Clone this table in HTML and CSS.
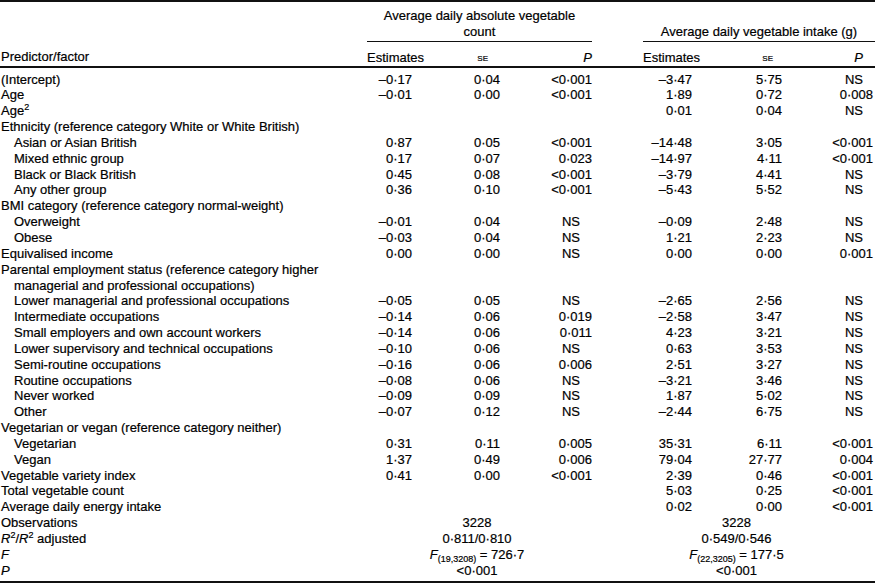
FILE: index.html
```html
<!DOCTYPE html>
<html>
<head>
<meta charset="utf-8">
<link rel="stylesheet" href="styles.css">
</head>
<body>
<table class="reg">
<colgroup>
<col class="w-label"><col class="w-est1"><col class="w-se1"><col class="w-p1"><col class="w-gap"><col class="w-est2"><col class="w-se2"><col class="w-p2">
</colgroup>
<thead>
<tr class="grp">
<th class="lbl" rowspan="2">Predictor/factor</th>
<th class="gh gh1" colspan="3">Average daily absolute vegetable<br>count</th>
<th class="gap"></th>
<th class="gh gh2" colspan="3">Average daily vegetable intake (g)</th>
</tr>
<tr class="sub">
<th class="h-est">Estimates</th>
<th class="h-se1"><span class="sc">se</span></th>
<th class="h-p1"><i>P</i></th>
<th class="gap"></th>
<th class="h-est">Estimates</th>
<th class="h-se2"><span class="sc">se</span></th>
<th class="h-p2"><i>P</i></th>
</tr>
</thead>
<tbody>
<tr class="first"><td>(Intercept)</td><td class="e1">–0·17</td><td class="s1">0·04</td><td class="p1">&lt;0·001</td><td></td><td class="e2">–3·47</td><td class="s2">5·75</td><td class="p2 ns">NS</td></tr>
<tr><td>Age</td><td class="e1">–0·01</td><td class="s1">0·00</td><td class="p1">&lt;0·001</td><td></td><td class="e2">1·89</td><td class="s2">0·72</td><td class="p2">0·008</td></tr>
<tr><td>Age<sup>2</sup></td><td class="e1"></td><td class="s1"></td><td class="p1"></td><td></td><td class="e2">0·01</td><td class="s2">0·04</td><td class="p2 ns">NS</td></tr>
<tr><td colspan="8">Ethnicity (reference category White or White British)</td></tr>
<tr><td class="ind">Asian or Asian British</td><td class="e1">0·87</td><td class="s1">0·05</td><td class="p1">&lt;0·001</td><td></td><td class="e2">–14·48</td><td class="s2">3·05</td><td class="p2">&lt;0·001</td></tr>
<tr><td class="ind">Mixed ethnic group</td><td class="e1">0·17</td><td class="s1">0·07</td><td class="p1">0·023</td><td></td><td class="e2">–14·97</td><td class="s2">4·11</td><td class="p2">&lt;0·001</td></tr>
<tr><td class="ind">Black or Black British</td><td class="e1">0·45</td><td class="s1">0·08</td><td class="p1">&lt;0·001</td><td></td><td class="e2">–3·79</td><td class="s2">4·41</td><td class="p2 ns">NS</td></tr>
<tr><td class="ind">Any other group</td><td class="e1">0·36</td><td class="s1">0·10</td><td class="p1">&lt;0·001</td><td></td><td class="e2">–5·43</td><td class="s2">5·52</td><td class="p2 ns">NS</td></tr>
<tr><td colspan="8">BMI category (reference category normal-weight)</td></tr>
<tr><td class="ind">Overweight</td><td class="e1">–0·01</td><td class="s1">0·04</td><td class="p1 ns">NS</td><td></td><td class="e2">–0·09</td><td class="s2">2·48</td><td class="p2 ns">NS</td></tr>
<tr><td class="ind">Obese</td><td class="e1">–0·03</td><td class="s1">0·04</td><td class="p1 ns">NS</td><td></td><td class="e2">1·21</td><td class="s2">2·23</td><td class="p2 ns">NS</td></tr>
<tr><td>Equivalised income</td><td class="e1">0·00</td><td class="s1">0·00</td><td class="p1 ns">NS</td><td></td><td class="e2">0·00</td><td class="s2">0·00</td><td class="p2">0·001</td></tr>
<tr><td colspan="8">Parental employment status (reference category higher</td></tr>
<tr><td colspan="8" class="ind">managerial and professional occupations)</td></tr>
<tr><td class="ind">Lower managerial and professional occupations</td><td class="e1">–0·05</td><td class="s1">0·05</td><td class="p1 ns">NS</td><td></td><td class="e2">–2·65</td><td class="s2">2·56</td><td class="p2 ns">NS</td></tr>
<tr><td class="ind">Intermediate occupations</td><td class="e1">–0·14</td><td class="s1">0·06</td><td class="p1">0·019</td><td></td><td class="e2">–2·58</td><td class="s2">3·47</td><td class="p2 ns">NS</td></tr>
<tr><td class="ind">Small employers and own account workers</td><td class="e1">–0·14</td><td class="s1">0·06</td><td class="p1">0·011</td><td></td><td class="e2">4·23</td><td class="s2">3·21</td><td class="p2 ns">NS</td></tr>
<tr><td class="ind">Lower supervisory and technical occupations</td><td class="e1">–0·10</td><td class="s1">0·06</td><td class="p1 ns">NS</td><td></td><td class="e2">0·63</td><td class="s2">3·53</td><td class="p2 ns">NS</td></tr>
<tr><td class="ind">Semi-routine occupations</td><td class="e1">–0·16</td><td class="s1">0·06</td><td class="p1">0·006</td><td></td><td class="e2">2·51</td><td class="s2">3·27</td><td class="p2 ns">NS</td></tr>
<tr><td class="ind">Routine occupations</td><td class="e1">–0·08</td><td class="s1">0·06</td><td class="p1 ns">NS</td><td></td><td class="e2">–3·21</td><td class="s2">3·46</td><td class="p2 ns">NS</td></tr>
<tr><td class="ind">Never worked</td><td class="e1">–0·09</td><td class="s1">0·09</td><td class="p1 ns">NS</td><td></td><td class="e2">1·87</td><td class="s2">5·02</td><td class="p2 ns">NS</td></tr>
<tr><td class="ind">Other</td><td class="e1">–0·07</td><td class="s1">0·12</td><td class="p1 ns">NS</td><td></td><td class="e2">–2·44</td><td class="s2">6·75</td><td class="p2 ns">NS</td></tr>
<tr><td colspan="8">Vegetarian or vegan (reference category neither)</td></tr>
<tr><td class="ind">Vegetarian</td><td class="e1">0·31</td><td class="s1">0·11</td><td class="p1">0·005</td><td></td><td class="e2">35·31</td><td class="s2">6·11</td><td class="p2">&lt;0·001</td></tr>
<tr><td class="ind">Vegan</td><td class="e1">1·37</td><td class="s1">0·49</td><td class="p1">0·006</td><td></td><td class="e2">79·04</td><td class="s2">27·77</td><td class="p2">0·004</td></tr>
<tr><td>Vegetable variety index</td><td class="e1">0·41</td><td class="s1">0·00</td><td class="p1">&lt;0·001</td><td></td><td class="e2">2·39</td><td class="s2">0·46</td><td class="p2">&lt;0·001</td></tr>
<tr><td>Total vegetable count</td><td class="e1"></td><td class="s1"></td><td class="p1"></td><td></td><td class="e2">5·03</td><td class="s2">0·25</td><td class="p2">&lt;0·001</td></tr>
<tr><td>Average daily energy intake</td><td class="e1"></td><td class="s1"></td><td class="p1"></td><td></td><td class="e2">0·02</td><td class="s2">0·00</td><td class="p2">&lt;0·001</td></tr>
<tr><td>Observations</td><td class="sp1" colspan="3">3228</td><td></td><td class="sp2" colspan="3">3228</td></tr>
<tr><td><i>R</i><sup>2</sup>/<i>R</i><sup>2</sup> adjusted</td><td class="sp1" colspan="3">0·811/0·810</td><td></td><td class="sp2" colspan="3">0·549/0·546</td></tr>
<tr><td><i>F</i></td><td class="sp1" colspan="3"><i>F</i><sub>(19,3208)</sub> = 726·7</td><td></td><td class="sp2" colspan="3"><i>F</i><sub>(22,3205)</sub> = 177·5</td></tr>
<tr class="last"><td><i>P</i></td><td class="sp1" colspan="3">&lt;0·001</td><td></td><td class="sp2" colspan="3">&lt;0·001</td></tr>
</tbody>
</table>
</body>
</html>
```
FILE: styles.css
```css
html, body {
  margin: 0;
  padding: 0;
  background: #fff;
}
body {
  font-family: "Liberation Sans", Arial, sans-serif;
  font-size: 13px;
  color: #000;
  -webkit-text-stroke: 0.2px #000;
}
.reg {
  width: 875px;
  border-collapse: collapse;
  table-layout: fixed;
  border-top: 2px solid #111;
  border-bottom: 2px solid #111;
}
.w-label { width: 367px; }
.w-est1 { width: 63px; }
.w-se1 { width: 90px; }
.w-p1 { width: 72px; }
.w-gap { width: 51px; }
.w-est2 { width: 57px; }
.w-se2 { width: 90px; }
.w-p2 { width: 85px; }

th, td {
  padding: 0;
  line-height: 15.85px;
  white-space: nowrap;
  font-weight: normal;
}
thead th { vertical-align: bottom; }
.lbl { text-align: left; padding-left: 1px; padding-bottom: 1px; }
.grp th { padding-top: 6px; padding-bottom: 1px; }
.gh { text-align: center; border-bottom: 1px solid #111; }
.sub th { padding-top: 7px; padding-bottom: 0; }
thead tr.sub { border-bottom: 2px solid #111; }
.h-est { text-align: left; }
.h-se1 { text-align: right; padding-right: 32px; }
.h-p1 { text-align: right; }
.h-se2 { text-align: right; padding-right: 17px; }
.h-p2 { text-align: right; padding-right: 12px; }
.sc { font-variant: small-caps; font-size: 12px; }

td { text-align: left; padding-left: 1px; }
.ind { padding-left: 14px; }
.e1 { text-align: right; padding-right: 18px; }
.s1 { text-align: right; padding-right: 20px; }
.p1 { text-align: right; }
.e2 { text-align: right; padding-right: 8px; }
.s2 { text-align: right; padding-right: 8px; }
.p2 { text-align: right; padding-right: 2px; }
.p1.ns, .p2.ns { padding-right: 12px; }
.sp1 { text-align: center; padding-right: 6px; }
.sp2 { text-align: center; padding-right: 46px; }
.first td { padding-top: 4px; }
.last td { padding-bottom: 2px; }
sup, sub { font-size: 9px; line-height: 0; }
sub { vertical-align: -3px; }
sup { vertical-align: 5px; }
```
